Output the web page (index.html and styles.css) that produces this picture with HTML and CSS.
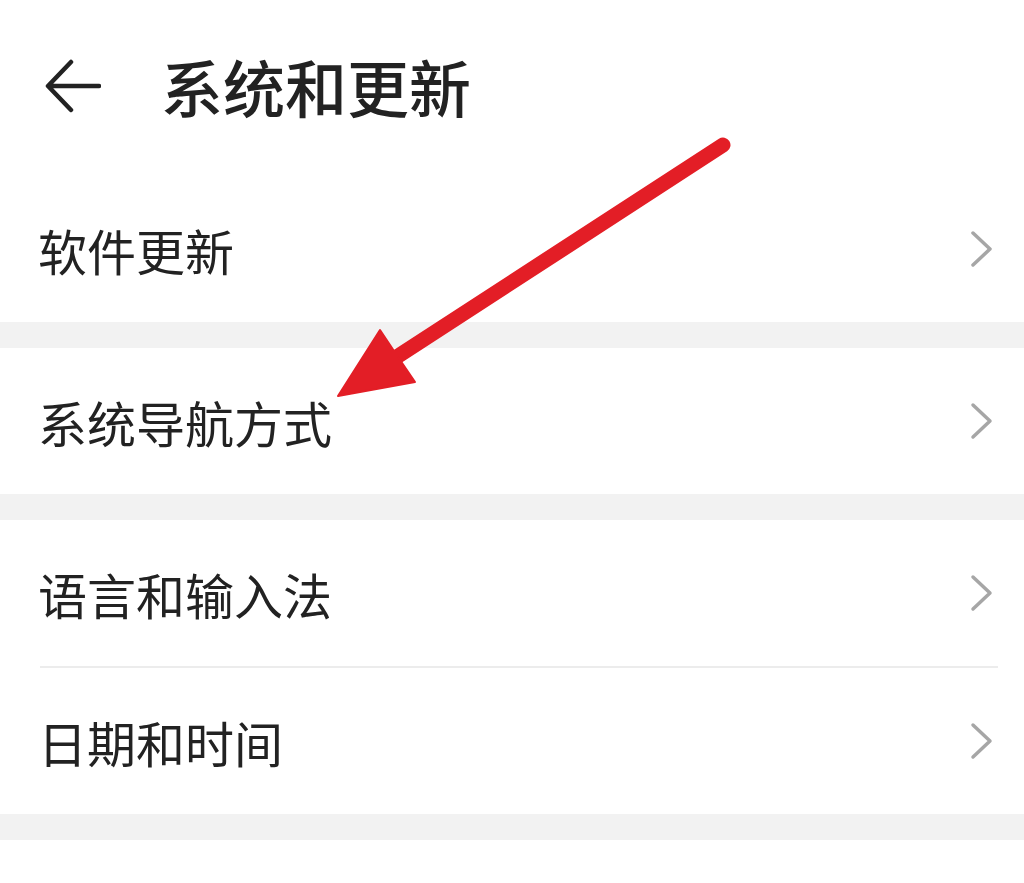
FILE: index.html
```html
<!DOCTYPE html>
<html lang="zh-CN">
<head>
<meta charset="utf-8">
<title>系统和更新</title>
<link rel="stylesheet" href="styles.css">
</head>
<body>
<div class="page">
  <header class="header">
    <svg class="back" viewBox="0 0 56 56" width="56" height="56" aria-hidden="true">
      <path d="M54 28 H4 M26 4 L3 28 L26 52" fill="none" stroke="#222" stroke-width="4.5" stroke-linecap="round" stroke-linejoin="round"/>
    </svg>
    <h1 class="title">系统和更新</h1>
  </header>

  <section class="group">
    <div class="row"><span class="label">软件更新</span><svg class="chev" viewBox="0 0 24 38" width="24" height="38" aria-hidden="true"><path d="M3 3 L20 19 L3 35" fill="none" stroke="#a6a6a6" stroke-width="3.5" stroke-linecap="round" stroke-linejoin="round"/></svg></div>
  </section>
  <div class="gap"></div>
  <section class="group">
    <div class="row"><span class="label">系统导航方式</span><svg class="chev" viewBox="0 0 24 38" width="24" height="38" aria-hidden="true"><path d="M3 3 L20 19 L3 35" fill="none" stroke="#a6a6a6" stroke-width="3.5" stroke-linecap="round" stroke-linejoin="round"/></svg></div>
  </section>
  <div class="gap"></div>
  <section class="group">
    <div class="row"><span class="label">语言和输入法</span><svg class="chev" viewBox="0 0 24 38" width="24" height="38" aria-hidden="true"><path d="M3 3 L20 19 L3 35" fill="none" stroke="#a6a6a6" stroke-width="3.5" stroke-linecap="round" stroke-linejoin="round"/></svg></div>
    <div class="divider"></div>
    <div class="row"><span class="label">日期和时间</span><svg class="chev" viewBox="0 0 24 38" width="24" height="38" aria-hidden="true"><path d="M3 3 L20 19 L3 35" fill="none" stroke="#a6a6a6" stroke-width="3.5" stroke-linecap="round" stroke-linejoin="round"/></svg></div>
  </section>
  <div class="gap"></div>
  <section class="group tail"></section>

  <svg class="pointer" viewBox="0 0 1024 883" width="1024" height="883" aria-hidden="true">
    <line x1="723" y1="145" x2="392" y2="360" stroke="#e31e26" stroke-width="15" stroke-linecap="round"/>
    <polygon points="338,396 380,330 398,357 415,382" fill="#e31e26" stroke="#e31e26" stroke-width="2" stroke-linejoin="round"/>
  </svg>
</div>
</body>
</html>
```

FILE: styles.css
```css
* { box-sizing: border-box; }
html, body {
  margin: 0;
  padding: 0;
  background: #ffffff;
}
body {
  font-family: "Noto Sans CJK SC", "Noto Sans", sans-serif;
  color: #1c1c1c;
}
.page {
  position: relative;
  width: 1024px;
  height: 883px;
  overflow: hidden;
}
.header {
  height: 176px;
  display: flex;
  align-items: center;
  padding: 0 0 4px 45px;
}
.back {
  flex: none;
  display: block;
}
.title {
  margin: 0 0 0 60px;
  font-size: 62px;
  font-weight: 500;
  line-height: 1;
  color: #222;
}
.group {
  background: #ffffff;
}
.row {
  height: 146px;
  display: flex;
  align-items: center;
  justify-content: space-between;
  padding: 0 30px 0 38px;
}
.label {
  font-size: 49px;
  font-weight: 400;
  line-height: 1;
  color: #222;
}
.chev {
  flex: none;
  display: block;
}
.divider {
  height: 2px;
  margin: 0 26px 0 40px;
  background: #ececec;
}
.gap {
  height: 26px;
  background: #f2f2f2;
}
.tail {
  height: 60px;
}
.pointer {
  position: absolute;
  left: 0;
  top: 0;
  pointer-events: none;
}
```
